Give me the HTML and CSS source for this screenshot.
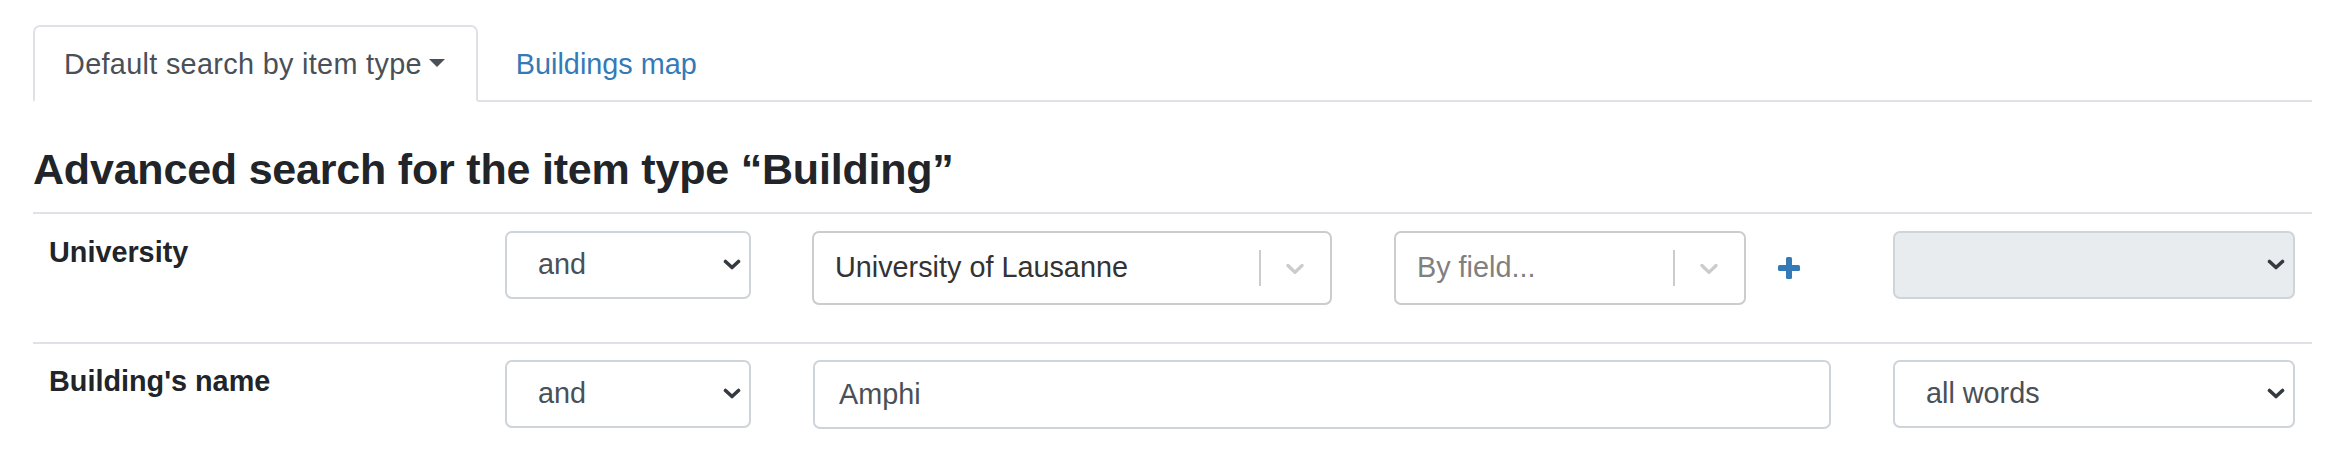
FILE: index.html
```html
<!DOCTYPE html>
<html lang="en">
<head>
<meta charset="utf-8">
<title>Advanced search</title>
<link rel="stylesheet" href="styles.css">
</head>
<body>
<div class="page">
  <ul class="tabs">
    <li class="tab active">Default search by item type<span class="caret"></span></li>
    <li class="tab link">Buildings map</li>
  </ul>
  <h2 class="title">Advanced search for the item type “Building”</h2>

  <div class="field-row first">
    <div class="label">University</div>
    <div class="select"><span>and</span><svg class="chev" viewBox="0 0 18 11"><polyline points="2.5,2.5 9,8.5 15.5,2.5"/></svg></div>
    <div class="value-group">
      <div class="rs rs-univ">
        <div class="rs-value">University of Lausanne</div>
        <span class="rs-sep"></span>
        <span class="rs-ind"><svg viewBox="0 0 20 20"><path d="M4.516 7.548c0.436-0.446 1.043-0.481 1.576 0l3.908 3.747 3.908-3.747c0.533-0.481 1.141-0.446 1.574 0 0.436 0.445 0.408 1.197 0 1.615-0.406 0.418-4.695 4.502-4.695 4.502-0.217 0.223-0.502 0.335-0.787 0.335s-0.57-0.112-0.789-0.335c0 0-4.287-4.084-4.695-4.502s-0.436-1.17 0-1.615z"/></svg></span>
      </div>
      <div class="rs rs-field">
        <div class="rs-value placeholder">By field...</div>
        <span class="rs-sep"></span>
        <span class="rs-ind"><svg viewBox="0 0 20 20"><path d="M4.516 7.548c0.436-0.446 1.043-0.481 1.576 0l3.908 3.747 3.908-3.747c0.533-0.481 1.141-0.446 1.574 0 0.436 0.445 0.408 1.197 0 1.615-0.406 0.418-4.695 4.502-4.695 4.502-0.217 0.223-0.502 0.335-0.787 0.335s-0.57-0.112-0.789-0.335c0 0-4.287-4.084-4.695-4.502s-0.436-1.17 0-1.615z"/></svg></span>
      </div>
      <svg class="plus" viewBox="0 0 22 22"><rect x="8" y="0" width="6" height="22" rx="1.5"/><rect x="0" y="8" width="22" height="6" rx="1.5"/></svg>
    </div>
    <div class="select disabled"><span></span><svg class="chev" viewBox="0 0 18 11"><polyline points="2.5,2.5 9,8.5 15.5,2.5"/></svg></div>
  </div>

  <div class="field-row second">
    <div class="label">Building's name</div>
    <div class="select"><span>and</span><svg class="chev" viewBox="0 0 18 11"><polyline points="2.5,2.5 9,8.5 15.5,2.5"/></svg></div>
    <div class="input">Amphi</div>
    <div class="select"><span>all words</span><svg class="chev" viewBox="0 0 18 11"><polyline points="2.5,2.5 9,8.5 15.5,2.5"/></svg></div>
  </div>
</div>
</body>
</html>
```

FILE: styles.css
```css
html, body {
  margin: 0;
  background: #fff;
}

body {
  font-family: "Liberation Sans", Arial, Helvetica, sans-serif;
  font-size: 28.8px;
  line-height: 1.5;
  color: #212529;
}

.page {
  padding: 25px 14px 0 33px;
}

/* Tabs */
.tabs {
  list-style: none;
  margin: 0;
  padding: 0;
  display: flex;
  border-bottom: 2px solid #dee2e6;
}

.tab {
  padding: 16px 29px 14px;
  border: 2px solid transparent;
  margin-bottom: -2px;
  border-radius: 7px 7px 0 0;
  white-space: nowrap;
}

.tab.active {
  color: #495057;
  background: #fff;
  border-color: #dee2e6 #dee2e6 #fff;
  padding-right: 31px;
  letter-spacing: 0.33px;
}

.tab.link {
  color: #337ab7;
  margin-left: 7px;
}

.caret {
  display: inline-block;
  margin-left: 7px;
  vertical-align: 0.255em;
  border-top: 8px solid #495057;
  border-left: 8px solid transparent;
  border-right: 8px solid transparent;
}

/* Heading */
.title {
  margin: 42px 0 16px;
  font-size: 43px;
  font-weight: 700;
  line-height: 1.2;
  letter-spacing: -0.2px;
  color: #212529;
}

/* Rows */
.field-row {
  display: grid;
  grid-template-columns: 410px 246px 1018px 402px;
  column-gap: 62px;
  align-items: start;
  border-top: 2px solid #dee2e6;
  padding: 17px 0 37px;
}

.field-row.second {
  padding-top: 16px;
}

.label {
  font-weight: 700;
  padding-left: 16px;
  white-space: nowrap;
}

.select {
  box-sizing: border-box;
  height: 68px;
  border: 2px solid #ced4da;
  border-radius: 7px;
  background: #fff;
  color: #495057;
  display: flex;
  align-items: center;
  justify-content: space-between;
  padding: 0 8px 0 31px;
  white-space: nowrap;
}

.select.disabled {
  background: #e9ecef;
}

.chev {
  width: 18px;
  height: 11px;
  flex: none;
  fill: none;
  stroke: #343a40;
  stroke-width: 3.6;
  stroke-linecap: round;
  stroke-linejoin: round;
}

.input {
  box-sizing: border-box;
  height: 69px;
  border: 2px solid #ced4da;
  border-radius: 7px;
  background: #fff;
  color: #495057;
  display: flex;
  align-items: center;
  padding: 0 24px;
}

/* React-select-like controls */
.value-group {
  display: flex;
  align-items: center;
}

.rs {
  box-sizing: border-box;
  height: 74px;
  border: 2px solid #ccc;
  border-radius: 7px;
  background: #fff;
  display: flex;
  align-items: center;
  flex: none;
}

.rs-univ {
  width: 520px;
  margin-left: -1px;
}

.rs-field {
  width: 352px;
  margin-left: 62px;
}

.rs-value {
  flex: 1;
  padding-left: 21px;
  color: #333;
  white-space: nowrap;
  overflow: hidden;
}

.rs-value.placeholder {
  color: #808080;
}

.rs-sep {
  align-self: stretch;
  margin: 17px 0;
  width: 2px;
  background: #ccc;
}

.rs-ind {
  display: flex;
  padding: 0 20px 0 19px;
}

.rs-ind svg {
  width: 30px;
  height: 30px;
  fill: #ccc;
}

.plus {
  width: 22px;
  height: 22px;
  margin-left: 32px;
  fill: #337ab7;
  flex: none;
}
```
